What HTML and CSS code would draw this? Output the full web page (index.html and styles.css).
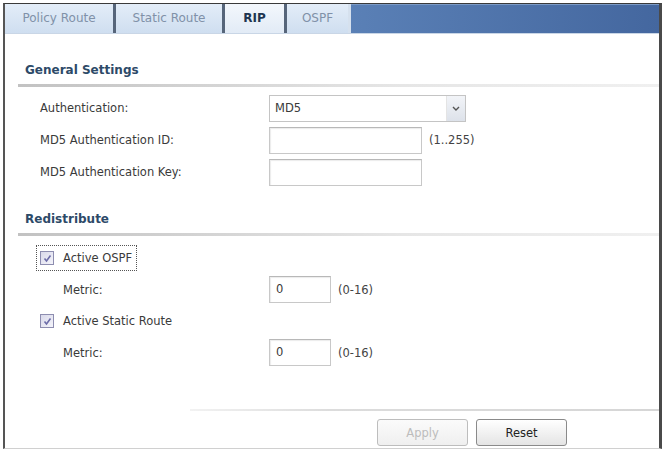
FILE: index.html
```html
<!DOCTYPE html>
<html lang="en">
<head>
    <meta charset="UTF-8">
    <title>RIP</title>
    <link rel="stylesheet" href="styles.css">
</head>
<body>
    <!-- outer frame -->
    <div class="frame">
        <!-- tab bar -->
        <div class="tabs">
            <div class="tab tab-policy">Policy Route</div>
            <div class="tab tab-static">Static Route</div>
            <div class="tab tab-rip active">RIP</div>
            <div class="tab tab-ospf">OSPF</div>
            <div class="tab-fill"></div>
        </div>

        <!-- General Settings -->
        <div class="section-title">General Settings</div>
        <div class="section-line"></div>
        <div class="row">
            <span class="label">Authentication:</span>
            <div class="select">
                <span class="select-text">MD5</span>
                <span class="select-btn">
                    <svg width="8" height="5" viewBox="0 0 8 5"><path d="M1 1 L4 4 L7 1" fill="none" stroke="#555" stroke-width="1.4"/></svg>
                </span>
            </div>
        </div>
        <div class="row">
            <span class="label">MD5 Authentication ID:</span>
            <div class="input wide"></div>
            <span class="hint">(1..255)</span>
        </div>
        <div class="row">
            <span class="label">MD5 Authentication Key:</span>
            <div class="input wide"></div>
        </div>

        <!-- Redistribute -->
        <div class="section-title redis">Redistribute</div>
        <div class="section-line"></div>
        <div class="row check-row">
            <label class="check focused">
                <span class="box">
                    <svg width="9" height="9" viewBox="0 0 9 9"><path d="M1.5 4.5 L3.5 7 L7.5 1.5" fill="none" stroke="#6c6ca8" stroke-width="1.6"/></svg>
                </span>
                Active OSPF
            </label>
        </div>
        <div class="row metric-row">
            <span class="label sub">Metric:</span>
            <div class="input small">0</div>
            <span class="hint">(0-16)</span>
        </div>
        <div class="row check-row">
            <label class="check">
                <span class="box">
                    <svg width="9" height="9" viewBox="0 0 9 9"><path d="M1.5 4.5 L3.5 7 L7.5 1.5" fill="none" stroke="#6c6ca8" stroke-width="1.6"/></svg>
                </span>
                Active Static Route
            </label>
        </div>
        <div class="row metric-row">
            <span class="label sub">Metric:</span>
            <div class="input small">0</div>
            <span class="hint">(0-16)</span>
        </div>

        <!-- buttons -->
        <div class="footer-line"></div>
        <div class="buttons">
            <button class="btn" disabled>Apply</button>
            <button class="btn">Reset</button>
        </div>
    </div>
</body>
</html>
```

FILE: styles.css
```css
*{
    margin: 0;
    padding: 0;
    box-sizing: border-box;
}
body{
    background: #ffffff;
    font-family: "DejaVu Sans", Verdana, sans-serif;
    font-size: 11.5px;
    color: #3a3a3a;
}
.frame{
    margin: 3px 0 0 3px;
    width: 659px;
    height: 446px;
    border-top: 1px solid #3a3a3a;
    border-left: 2px solid #555555;
    border-right: 3px solid #4a4a4a;
    border-bottom: 1px solid #d0d0d0;
}
/* tab bar */
.tabs{
    display: flex;
    height: 30px;
    border-bottom: 1px solid #c9d6e6;
}
.tab{
    height: 29px;
    line-height: 29px;
    text-align: center;
    font-size: 12px;
    color: #8091a8;
    background: linear-gradient(#e3edf8, #cfdef0);
    border-right: 3px solid #56657a;
}
.tab-policy{ width: 111px; }
.tab-static{ width: 109px; }
.tab-rip{ width: 62px; }
.tab-ospf{ width: 64px; border-right: 3px solid #d6e1ee; }
.tab.active{
    background: linear-gradient(#f3f7fc, #e2ebf6);
    color: #1f3550;
    font-weight: bold;
}
.tab-fill{
    flex: 1;
    height: 29px;
    background: linear-gradient(to right, #5a80b6, #44679f);
    border-top: 1px solid #7b9ac6;
}
/* sections */
.section-title{
    margin: 28px 0 0 20px;
    line-height: 16px;
    font-size: 12px;
    font-weight: bold;
    color: #2d4a68;
}
.section-title.redis{
    margin-top: 23px;
}
.section-line{
    margin: 6px 0 0 13px;
    height: 3px;
    background: linear-gradient(to right, #c2c2c2, #e6e6e6 60%, #f0f0f0);
}
.row{
    display: flex;
    align-items: center;
    height: 32px;
    padding-left: 35px;
}
.section-line + .row{
    margin-top: 5px;
}
.label{
    width: 229px;
}
.label.sub{
    padding-left: 23px;
}
.select{
    width: 197px;
    height: 27px;
    border: 1px solid #c4c4c4;
    display: flex;
    align-items: center;
    background: #ffffff;
}
.select-text{
    flex: 1;
    padding-left: 5px;
}
.select-btn{
    width: 19px;
    height: 25px;
    display: flex;
    align-items: center;
    justify-content: center;
    background: linear-gradient(#f2f4f8, #dde2ea);
    border-left: 1px solid #e4e4e4;
}
.input{
    height: 27px;
    border: 1px solid #c8c8c8;
    border-top-color: #b8b8b8;
    box-shadow: inset 1px 1px 1px #ececec;
    background: #ffffff;
    line-height: 25px;
    padding-left: 6px;
}
.input.wide{
    width: 153px;
}
.input.small{
    width: 62px;
}
.hint{
    margin-left: 7px;
    color: #444444;
}
/* checkboxes */
.check-row{
    height: 32px;
}
.section-line + .check-row{
    margin-top: 6px;
}
.check{
    display: flex;
    align-items: center;
    gap: 9px;
    height: 26px;
    padding: 0 4px 0 3px;
    border: 1px solid transparent;
    margin-left: -4px;
}
.check.focused{
    border: 1px dotted #555555;
}
.box{
    width: 14px;
    height: 14px;
    border: 1px solid #8d8db0;
    background: linear-gradient(135deg, #d9d9ea, #f4f4fa);
    display: flex;
    align-items: center;
    justify-content: center;
}
.metric-row{
    height: 31px;
}
/* footer */
.footer-line{
    margin: 41px 0 0 185px;
    height: 2px;
    background: linear-gradient(to right, #f2f2f2, #dcdcdc 30%, #d6d6d6);
}
.buttons{
    display: flex;
    gap: 8px;
    padding-left: 372px;
    margin-top: 8px;
}
.btn{
    width: 91px;
    height: 27px;
    border: 1px solid #8a8a8a;
    border-radius: 3px;
    background: linear-gradient(#ffffff, #e4e4e4);
    font-family: "DejaVu Sans", Verdana, sans-serif;
    font-size: 11.5px;
    color: #222222;
}
.btn:disabled{
    border-color: #bdbdbd;
    color: #bcbcbc;
    background: linear-gradient(#fbfbfb, #efefef);
}
```
